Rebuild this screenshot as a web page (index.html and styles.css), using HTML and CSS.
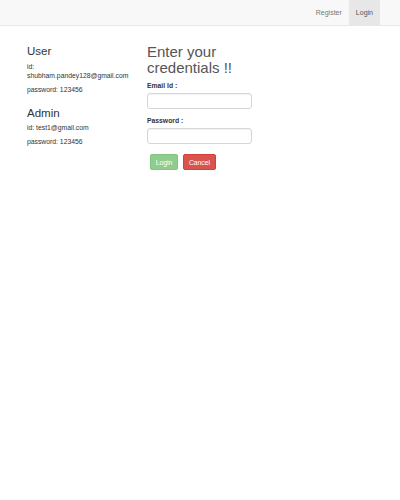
FILE: index.html
```html
<!DOCTYPE html>
<html>
<head>
<meta charset="utf-8">
<link rel="stylesheet" href="styles.css">
</head>
<body>
<nav class="navbar">
  <ul class="nav">
    <li><a class="nav-link">Register</a></li>
    <li><a class="nav-link active">Login</a></li>
  </ul>
</nav>
<main class="content">
  <section class="info">
    <h3 class="info-title">User</h3>
    <p class="info-line">id:<br>shubham.pandey128@gmail.com</p>
    <p class="info-line">password: 123456</p>
    <h3 class="info-title">Admin</h3>
    <p class="info-line">id: test1@gmail.com</p>
    <p class="info-line">password: 123456</p>
  </section>
  <section class="form-col">
    <h1 class="form-title">Enter your credentials !!</h1>
    <form class="form">
      <label class="label">Email Id :</label>
      <input class="input" type="text">
      <label class="label">Password :</label>
      <input class="input" type="password">
      <div class="buttons">
        <button type="button" class="btn btn-login">Login</button>
        <button type="button" class="btn btn-cancel">Cancel</button>
      </div>
    </form>
  </section>
</main>
</body>
</html>
```
FILE: styles.css
```css
* { box-sizing: border-box; }
html, body { margin: 0; padding: 0; background: #fff; }
body {
  font-family: "Liberation Sans", Arial, sans-serif;
  font-size: 6.8px;
  line-height: 9px;
  color: #333;
}
.navbar {
  height: 26px;
  background: #f8f8f8;
  border-bottom: 1px solid #e7e7e7;
  display: flex;
  justify-content: flex-end;
  padding-right: 20px;
}
.nav {
  list-style: none;
  margin: 0;
  padding: 0;
  display: flex;
}
.nav-link {
  display: block;
  height: 25px;
  line-height: 25px;
  padding: 0 7px;
  color: #777;
  font-size: 7px;
  text-decoration: none;
}
.nav-link.active {
  background: #e7e7e7;
  color: #555;
}
.content {
  display: flex;
  padding-left: 27px;
  padding-top: 18px;
}
.info { width: 120px; padding-top: 1px; }
.info-title {
  font-size: 11.5px;
  font-weight: 500;
  line-height: 12.6px;
  margin: 0 0 4px;
  color: #333;
}
.info-line {
  margin: 0 0 5px;
}
.info-line + .info-title { margin-top: 13px; }
.form-col { width: 120px; }
.form-title {
  margin: 0 0 5px;
  font-size: 15px;
  font-weight: 500;
  line-height: 16px;
  color: #555;
}
.form { display: flex; flex-direction: column; }
.label {
  font-weight: bold;
  font-size: 6.8px;
  line-height: 10px;
  margin-bottom: 2px;
  color: #333;
}
.input {
  width: 105px;
  height: 16px;
  border: 1px solid #d6d6d6;
  border-radius: 3px;
  margin: 0 0 7px;
  background: #fff;
  box-shadow: inset 0 1px 1px rgba(0,0,0,.05);
}
.buttons {
  display: flex;
  gap: 5px;
  padding-left: 3px;
  margin-top: 3px;
}
.btn {
  height: 16px;
  padding: 0;
  border-radius: 2px;
  font-family: "Liberation Sans", Arial, sans-serif;
  font-size: 6.8px;
  color: #fff;
  border: 1px solid transparent;
}
.btn-login { background: #8fcd8f; border-color: #80c680; width: 28px; }
.btn-cancel { background: #d9534f; border-color: #d43f3a; width: 33px; }
```
